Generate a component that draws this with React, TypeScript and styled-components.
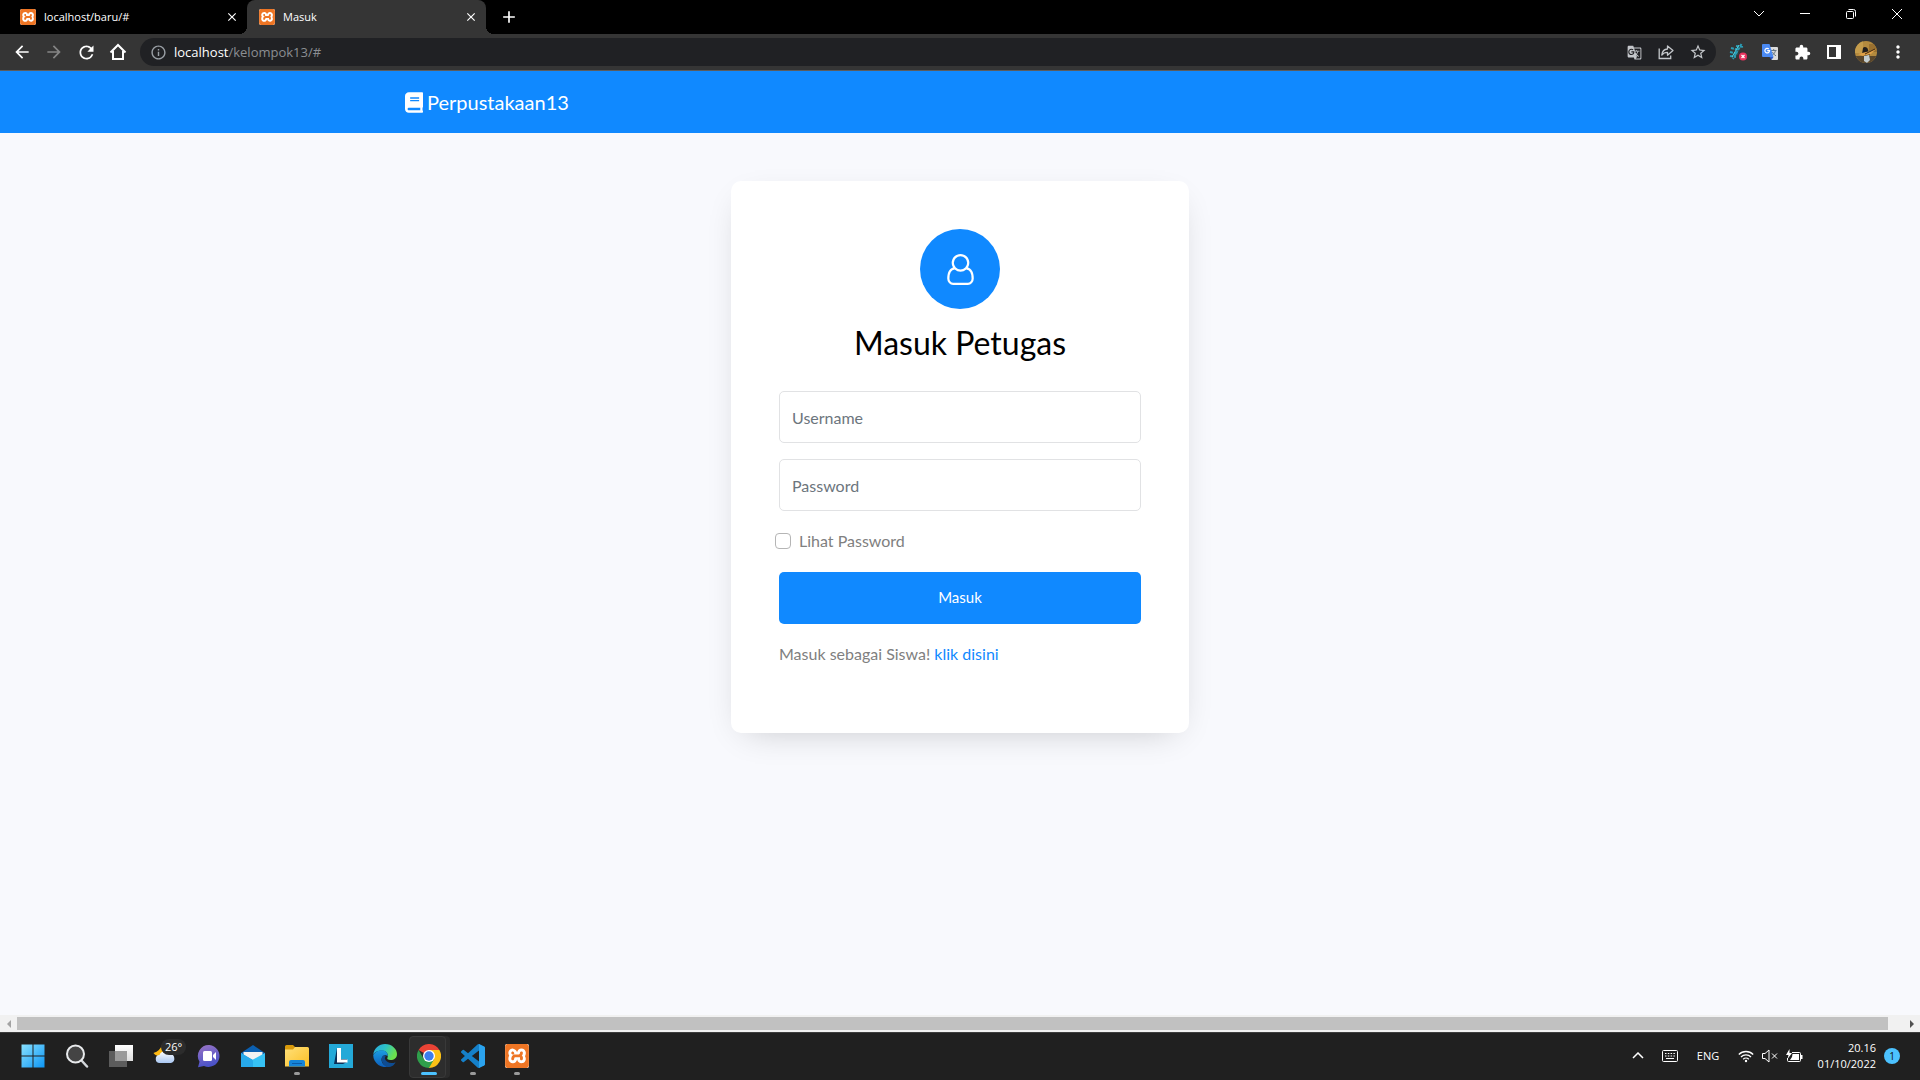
import React, { useState } from "react";
import styled, { createGlobalStyle } from "styled-components";
import {
  MdArrowBack,
  MdArrowForward,
  MdRefresh,
  MdOutlineInfo,
  MdGTranslate,
  MdStarBorder,
  MdExtension,
  MdMoreVert,
  MdClose,
  MdAdd,
} from "react-icons/md";
import { FaBook } from "react-icons/fa";
import { SiXampp } from "react-icons/si";

const BLUE = "#1089ff";

const GlobalStyle = createGlobalStyle`
  * { box-sizing: border-box; }
  body {
    margin: 0;
    font-family: Lato, sans-serif;
    font-size: 16px;
    line-height: 27px;
    color: gray;
    background: #f8f9fd;
  }
  button, input { font: inherit; }
`;

const systemFont = `"Open Sans", "Noto Sans", sans-serif`;

const Screen = styled.div`
  display: flex;
  flex-direction: column;
  min-height: 100vh;
`;

/* ---------- browser window ---------- */

const TitleBar = styled.header`
  display: flex;
  height: 34px;
  background: #000;
  font-family: ${systemFont};
`;

const TabList = styled.div`
  display: flex;
  padding: 0 8px;
`;

const Tab = styled.div<{ $active?: boolean }>`
  position: relative;
  display: flex;
  align-items: center;
  width: 239px;
  padding: 0 8px 0 12px;
  color: #fff;
  border-radius: 8px 8px 0 0;
  background: ${(p) => (p.$active ? "#353535" : "transparent")};

  ${(p) =>
    p.$active &&
    `
    &::before, &::after {
      content: "";
      position: absolute;
      bottom: 0;
      width: 8px;
      height: 8px;
    }
    &::before {
      right: 100%;
      background: radial-gradient(circle at 0 0, #000 8px, #353535 8px);
    }
    &::after {
      left: 100%;
      background: radial-gradient(circle at 100% 0, #000 8px, #353535 8px);
    }
  `}
`;

const TabLabel = styled.button`
  flex: 1;
  display: flex;
  align-items: center;
  gap: 8px;
  padding: 0;
  border: 0;
  background: none;
  color: inherit;
  font-size: 11px;
  line-height: 16px;
  text-align: left;
`;

const GlyphButton = styled.button<{ $w: number; $tone?: "dim" | "soft" }>`
  display: flex;
  align-items: center;
  justify-content: center;
  flex: none;
  width: ${(p) => p.$w}px;
  padding: 0;
  border: 0;
  background: none;
  color: ${(p) => (p.$tone === "dim" ? "#858585" : p.$tone === "soft" ? "#c4c7cb" : "#fff")};
`;

const WindowControls = styled.div`
  display: flex;
  height: 28px;
  margin-left: auto;
`;

const Toolbar = styled.div`
  display: flex;
  align-items: center;
  height: 37px;
  padding: 0 6px;
  background: #353535;
  border-bottom: 1px solid #5c5c5c;
  font-family: ${systemFont};
`;

const Omnibox = styled.div`
  flex: 1;
  display: flex;
  align-items: center;
  height: 28px;
  margin: 0 6px;
  padding: 0 2px 0 10px;
  border-radius: 14px;
  background: #202124;
  color: #9aa0a6;
`;

const Address = styled.a`
  flex: 1;
  padding-left: 7px;
  font-size: 13px;
  line-height: 18px;
  color: #8b8e92;
  text-decoration: none;

  b {
    font-weight: 400;
    color: #fff;
  }
`;

const LogoBox = styled.span<{ $size: number }>`
  display: flex;
  flex: none;
  width: ${(p) => p.$size}px;
  height: ${(p) => p.$size}px;
  border-radius: 2px;
  background: #fff;
  color: #ee7524;
  overflow: hidden;
`;

/* ---------- page ---------- */

const Navbar = styled.nav`
  background: ${BLUE};
`;

const Container = styled.div`
  display: flex;
  align-items: center;
  max-width: 1140px;
  height: 62px;
  margin: 0 auto;
  padding: 0 15px;
`;

const Brand = styled.a`
  display: flex;
  align-items: center;
  gap: 4px;
  color: #fff;
  font-size: 20px;
  line-height: 30px;
  text-decoration: none;
`;

const BookIcon = styled(FaBook)`
  width: 18px;
  height: 21px;
`;

const Main = styled.main`
  flex: 1;
  padding: 48px 16px;
`;

const Card = styled.form`
  max-width: 458px;
  margin: 0 auto;
  padding: 48px;
  border-radius: 10px;
  background: #fff;
  box-shadow: 0 10px 34px -15px rgba(0, 0, 0, 0.24);
`;

const Avatar = styled.div`
  display: flex;
  align-items: center;
  justify-content: center;
  width: 80px;
  height: 80px;
  margin: 0 auto 10px;
  border-radius: 50%;
  background: ${BLUE};
`;

const Title = styled.h1`
  margin: 0 0 24px;
  font-size: 32px;
  font-weight: 400;
  line-height: 48px;
  color: #000;
  text-align: center;
`;

const Field = styled.input`
  display: block;
  width: 100%;
  height: 52px;
  margin-bottom: 16px;
  padding: 0 12px;
  border: 1px solid #e1e2e4;
  border-radius: 5px;
  background: #fff;
  color: #495057;

  &::placeholder {
    color: #6c757d;
    opacity: 1;
  }
`;

const CheckRow = styled.label`
  display: flex;
  align-items: center;
  gap: 8px;
  margin: 0 -4px 18px;
`;

const Checkbox = styled.input`
  appearance: none;
  width: 16px;
  height: 16px;
  margin: 0;
  border: 1px solid #b5b5b5;
  border-radius: 4px;
  background: #fff;

  &:checked {
    background: ${BLUE};
    border-color: ${BLUE};
  }
`;

const Submit = styled.button`
  display: block;
  width: 100%;
  height: 52px;
  padding: 0 12px 2px;
  border: 0;
  border-radius: 5px;
  background: ${BLUE};
  color: #fff;
  font-size: 15px;
`;

const Note = styled.p`
  margin: 16px 0 18px;

  a {
    color: ${BLUE};
    text-decoration: none;
  }
`;

const ScrollTrack = styled.div`
  display: flex;
  align-items: center;
  height: 17px;
  background: #f1f1f1;
`;

const ScrollArrow = styled.button<{ $end?: boolean }>`
  display: flex;
  align-items: center;
  justify-content: center;
  flex: none;
  width: 17px;
  height: 17px;
  padding: 0;
  border: 0;
  background: none;
  color: ${(p) => (p.$end ? "#505050" : "#a3a3a3")};
`;

const ScrollThumb = styled.div`
  flex: 1;
  height: 13px;
  margin-right: 15px;
  background: #c1c1c1;
`;

/* ---------- taskbar ---------- */

const Taskbar = styled.footer`
  display: flex;
  align-items: center;
  height: 48px;
  padding: 0 20px 2px 11px;
  background: #202020;
  border-top: 1px solid #3d3d3d;
  color: #fff;
  font-family: ${systemFont};
  font-size: 11px;
  line-height: 16px;
`;

const AppButton = styled.button<{ $state?: "open" | "active" }>`
  position: relative;
  display: flex;
  align-items: center;
  justify-content: center;
  flex: none;
  width: 44px;
  height: 45px;
  padding: 0;
  border: 0;
  background: none;

  ${(p) =>
    p.$state &&
    `
    &::after {
      content: "";
      position: absolute;
      bottom: 3px;
      width: ${p.$state === "active" ? 16 : 6}px;
      height: 3px;
      border-radius: 2px;
      background: ${p.$state === "active" ? "#4cc2ff" : "#9a9a9a"};
    }
  `}
  ${(p) =>
    p.$state === "active" &&
    `
    &::before {
      content: "";
      position: absolute;
      left: 2px;
      top: 3px;
      width: 35px;
      height: 40px;
      border: 1px solid #393939;
      border-radius: 4px;
      background: #2d2d2d;
      box-shadow: 4px 0 0 #2b2b2b;
    }
    svg { position: relative; }
  `}
`;

const Temperature = styled.span`
  position: absolute;
  top: 6px;
  left: 18px;
  padding: 0 4px;
  border-radius: 8px;
  background: #2c2c2c;
  color: #fff;
`;

const Tray = styled.div`
  display: flex;
  align-items: center;
  margin-left: auto;
`;

const TrayButton = styled.button<{ $w: number }>`
  display: flex;
  align-items: center;
  justify-content: center;
  width: ${(p) => p.$w}px;
  height: 40px;
  padding: 0;
  border: 0;
  background: none;
  color: #fff;
`;

const Clock = styled.button`
  width: 74px;
  padding: 0 8px 0 0;
  border: 0;
  background: none;
  color: #fff;
  text-align: right;
`;

const Count = styled.span`
  width: 16px;
  height: 16px;
  border-radius: 50%;
  background: #4cc2ff;
  color: #111;
  font-size: 10px;
  text-align: center;
`;

/* ---------- drawings ---------- */

const XamppLogo = ({ size }: { size: number }) => (
  <LogoBox $size={size}>
    <SiXampp size={size} />
  </LogoBox>
);

const HomeIcon = () => (
  <svg width="18" height="18" viewBox="0 0 18 18" fill="none" stroke="currentColor" strokeWidth="2">
    <path d="M1.500 9.500 9 2l7.500 7.500M4 8v8h10V8" />
  </svg>
);

const ShareIcon = () => (
  <svg width="16" height="16" viewBox="0 0 16 16" fill="none" stroke="currentColor" strokeWidth="1.300">
    <path d="M1.200 4.500v10h11.500v-3" />
    <path d="M9.500 2v3C6 5.200 4.200 7.500 3.800 11c1.500-2 3.200-2.700 5.700-2.700v3L15 6.600z" strokeLinejoin="round" />
  </svg>
);

const BrushExtension = () => (
  <svg width="18" height="18" viewBox="0 0 18 18">
    <path d="M12.500 1 4 16M2 5l8 2M1 9l8 2M7 3l8 1M1 13l6 1" stroke="#2b9cb4" strokeWidth="2" fill="none" strokeDasharray="3 1" />
    <path d="M10 2 3 14" stroke="#4fd0e0" strokeWidth="1" />
    <circle cx="14" cy="13.500" r="4" fill="#e8335f" />
    <path d="m12.500 12 3 3m0-3-3 3" stroke="#fff" strokeWidth="1.200" />
  </svg>
);

const TranslateExtension = () => (
  <svg width="16" height="16" viewBox="0 0 16 16">
    <path d="M6 3h9a1 1 0 0 1 1 1v11a1 1 0 0 1-1 1H9.500z" fill="#dcdcdc" />
    <path d="M9 6.500h5.500M11.700 5v1.500M13.500 6.500c-.5 2.300-1.800 4-3.500 5M10.500 8c.5 1.500 2 3 3.500 3.800" stroke="#687783" fill="none" />
    <path d="M1 0h6.500l4 13H1a1 1 0 0 1-1-1V1a1 1 0 0 1 1-1z" fill="#4a8af4" />
    <path d="m7.500 13 2 3 2-3z" fill="#2a56c6" />
    <path d="M6.800 5A2.300 2.300 0 1 0 7.500 6.700H5.200" stroke="#fff" strokeWidth="1.200" fill="none" />
  </svg>
);

const SidePanelIcon = () => (
  <svg width="14" height="14" viewBox="0 0 14 14">
    <path d="M0 0h14v14H0zM2 2v10h7V2z" fill="currentColor" fillRule="evenodd" />
  </svg>
);

const ProfilePicture = () => (
  <svg width="22" height="22" viewBox="0 0 22 22">
    <clipPath id="profile"><circle cx="11" cy="11" r="11" /></clipPath>
    <g clipPath="url(#profile)">
      <path d="M0 0h22v22H0z" fill="#b48a3e" />
      <path d="M0 0h8v12H0z" fill="#c49c4c" />
      <path d="M14 3h8v8h-8z" fill="#9a7130" />
      <path d="M0 15h22v7H0z" fill="#59462c" />
      <path d="M8 7c1-2 5-1 5 2l2 5-5 2-3-3z" fill="#211d1b" />
      <path d="m9 15 5-1 1 5-3 3-3-2z" fill="#c3cdd0" />
      <path d="m3 13 12-3 6-2-5 5-8 2z" fill="#dfa047" />
      <path d="m10 13 10-5" stroke="#40270f" />
    </g>
  </svg>
);

const UserOutline = () => (
  <svg width="27" height="31" viewBox="128 0 1536 1792" fill="#fff">
    <path
      fillRule="evenodd"
      d="M1329 784q47 14 89.500 38t89 73 79.500 115.500 55 172 22 236.500q0 154-100 263.500t-241 109.500H469q-141 0-241-109.500T128 1419q0-131 22-236.500t55-172T284.500 895t89-73 89.500-38q-79-125-79-272 0-104 40.500-198.500T534 150 697.500 40.500 896 0t198.500 40.500T1258 150t109.500 163.500T1408 512q0 147-79 272zM896 128q-159 0-271.500 112.500T512 512t112.500 271.500T896 896t271.500-112.500T1280 512t-112.500-271.500T896 128zm427 1536q88 0 150.500-71.500T1536 1419q0-239-78.500-377T1232 897q-145 127-336 127T560 897q-147 7-225.500 145T256 1419q0 102 62.500 173.500T469 1664h854z"
    />
  </svg>
);

const StartLogo = () => (
  <svg width="24" height="24" viewBox="0 0 24 24">
    <linearGradient id="start" gradientUnits="userSpaceOnUse" x1="0" y1="0" x2="24" y2="24">
      <stop stopColor="#8be3ff" />
      <stop offset="1" stopColor="#0a94f5" />
    </linearGradient>
    <path d="M.5.5h11v11H.5zM12.500.5h11v11h-11zM.5 12.500h11v11H.5zM12.500 12.500h11v11h-11z" fill="url(#start)" />
  </svg>
);

const SearchLogo = () => (
  <svg width="24" height="24" viewBox="0 0 24 24">
    <path d="m17 17 5 5.500" stroke="#d4d8dc" strokeWidth="2.500" strokeLinecap="round" />
    <circle cx="10.500" cy="10" r="8.500" fill="#444" stroke="#e8eaec" strokeWidth="2" />
  </svg>
);

const TaskViewLogo = () => (
  <svg width="24" height="24" viewBox="0 0 24 24">
    <linearGradient id="tv" y2="1" x2="0"><stop stopColor="#fff" /><stop offset="1" stopColor="#ddd" /></linearGradient>
    <path d="M6 1h18v16H6z" fill="url(#tv)" />
    <path d="M0 7h18v16H0z" fill="#5c5c5c" />
    <path d="M6 7h12v10H6z" fill="#9a9a9a" />
  </svg>
);

const WeatherLogo = () => (
  <svg width="24" height="24" viewBox="0 0 24 24">
    <path d="M9 1c-1.500 4-4 6.500-8.500 8C3 13 9 13 12 9 10 7 9 4 9 1z" fill="#fdb913" />
    <linearGradient id="cloud" x2="0" y2="1"><stop stopColor="#fff" /><stop offset="1" stopColor="#a9c7f2" /></linearGradient>
    <path d="M6 19a4 4 0 0 1-.5-8 5.500 5.500 0 0 1 9.800-1 4.600 4.600 0 0 1 1.700 9z" transform="translate(1 0)" fill="url(#cloud)" />
  </svg>
);

const ChatLogo = () => (
  <svg width="24" height="24" viewBox="0 0 24 24">
    <linearGradient id="chat" x2="0.300" y2="1"><stop stopColor="#9a74c4" /><stop offset="1" stopColor="#4a52c8" /></linearGradient>
    <path d="M12.500 1A11 11 0 1 1 7 22l-6 1.200 1.500-5.500A11 11 0 0 1 12.500 1z" fill="url(#chat)" />
    <rect x="6" y="7" width="9" height="10" rx="1.500" fill="#fff" />
    <path d="m16 11 3-3v8l-3-3z" fill="#fff" />
  </svg>
);

const MailLogo = () => (
  <svg width="24" height="24" viewBox="0 0 24 24">
    <path d="M0 9 12 1l12 8v5H0z" fill="#0b5fb0" />
    <path d="M2.500 8h19v8h-19z" fill="#f2f2f2" />
    <path d="M0 9v14h24z" fill="#1c9ae0" />
    <path d="M24 9v14H0L12 15.500z" fill="#36c2f5" />
    <path d="m0 9 12 7.500V23H0z" fill="#27a9ea" />
  </svg>
);

const FolderLogo = () => (
  <svg width="24" height="24" viewBox="0 0 24 24">
    <linearGradient id="folder" x2="1" y2="1"><stop stopColor="#ffe07a" /><stop offset="1" stopColor="#fbbf24" /></linearGradient>
    <path d="M0 2.500A1.500 1.500 0 0 1 1.500 1H8l2 2v5H0z" fill="#d99a0b" />
    <path d="M0 5.500h8L10 3h12.500A1.500 1.500 0 0 1 24 4.500V22.500H0z" fill="url(#folder)" />
    <path d="M4 22.500V18a2 2 0 0 1 2-2h12a2 2 0 0 1 2 2v4.500z" fill="#1585d8" />
    <path d="M7 19.500h10" stroke="#0b5ca8" strokeWidth="1" />
  </svg>
);

const LetterLogo = () => (
  <svg width="24" height="24" viewBox="0 0 24 24">
    <path d="M0 0h24v24H0z" fill="#24a9d8" />
    <path d="M8 4 5 20h9l4-2V15h-6z" fill="#0c2f57" />
    <path d="M8 4h4v11.500h6.500V18.500H8z" fill="#fff" />
  </svg>
);

const EdgeLogo = () => (
  <svg width="24" height="24" viewBox="0 0 24 24">
    <linearGradient id="edgeTop" x2="1" y2="0.400"><stop stopColor="#2aa6e0" /><stop offset="0.500" stopColor="#2cc3c9" /><stop offset="1" stopColor="#6be04c" /></linearGradient>
    <linearGradient id="edgeLow" x2="0" y2="1"><stop stopColor="#1b9de2" /><stop offset="1" stopColor="#0d5ebb" /></linearGradient>
    <path d="M.3 10.500C1 4.500 6 0 12 0c7 0 12 5 12 10 0 4-3 6-6.500 6-2.500 0-4-1-3-2.500C16 10 13 6.500 9 6.500S2 8 .3 10.500z" fill="url(#edgeTop)" />
    <path d="M.2 11C2 7.500 6 6 9.500 6.300 13 6.500 15 9.500 14.800 12 12 10 8.500 12 8.500 15.500c0 4 3.500 7.500 8 6.700A12 12 0 0 1 .2 11z" fill="url(#edgeLow)" />
    <path d="M10 11.500c-2.500 3-1.500 9 4 11.500 4 .5 7.500-2 8.500-4.800-5 2.300-9.500-.2-10.500-3.200-.3-1.200.2-2 .8-2.600-.8-.9-1.800-1.200-2.800-.9z" fill="#0e4c92" />
  </svg>
);

const ChromeLogo = () => (
  <svg width="24" height="24" viewBox="0 0 24 24">
    <path d="M12 12 1.600 6A12 12 0 0 1 22.400 6z" fill="#ea4335" />
    <path d="M12 12V6h10.400A12 12 0 0 1 12 24z" fill="#fbc116" />
    <path d="M1.600 6 6.800 15 12 12l5.200 3L12 24A12 12 0 0 1 1.600 6z" fill="#2f9e4b" />
    <circle cx="12" cy="12" r="6" fill="#fff" />
    <circle cx="12" cy="12" r="4.700" fill="#3b7ded" />
  </svg>
);

const CodeLogo = () => (
  <svg width="24" height="24" viewBox="0 0 24 24">
    <path
      d="M23.150 2.587 18.210.21a1.494 1.494 0 0 0-1.705.29l-9.460 8.630-4.120-3.128a.999.999 0 0 0-1.276.057L.327 7.261A1 1 0 0 0 .326 8.740L3.899 12 .326 15.260a1 1 0 0 0 .001 1.479L1.650 17.940a.999.999 0 0 0 1.276.057l4.120-3.128 9.460 8.630a1.492 1.492 0 0 0 1.704.290l4.942-2.377A1.500 1.500 0 0 0 24 20.060V3.939a1.500 1.500 0 0 0-.850-1.352zm-5.146 14.861L10.826 12l7.178-5.448v10.896z"
      fill="#1580c9"
    />
    <path d="m18 0 5.300 2.700q.7.400.7 1.300v16q0 .9-.7 1.300L18 24z" fill="#2ba3ee" />
  </svg>
);

const KeyboardIcon = () => (
  <svg width="16" height="12" viewBox="0 0 16 12" fill="none" stroke="currentColor">
    <rect x="0.500" y="0.500" width="15" height="11" rx="1" />
    <path d="M3 3.500h10M3 6h10" strokeDasharray="1.500 1.300" />
    <path d="M4 8.500h8" />
  </svg>
);

const WifiIcon = () => (
  <svg width="16" height="14" viewBox="0 0 16 14" fill="none" stroke="currentColor" strokeWidth="1.300">
    <path d="M.8 5.500a10.200 10.200 0 0 1 14.400 0M3 8a7 7 0 0 1 10 0M5.200 10.300a4 4 0 0 1 5.600 0" />
    <circle cx="8" cy="12" r="1.200" fill="currentColor" stroke="none" />
  </svg>
);

const MutedIcon = () => (
  <svg width="16" height="14" viewBox="0 0 16 14" fill="none" stroke="currentColor">
    <path d="M.5 4.500H3L7 1v12L3 9.500H.5zM10 4.500l5 5m0-5-5 5" />
  </svg>
);

const BatteryIcon = () => (
  <svg width="17" height="14" viewBox="0 0 17 14">
    <path d="M6 3.500h7.500a1 1 0 0 1 1 1v7a1 1 0 0 1-1 1h-11a1 1 0 0 1-1-1V9" fill="none" stroke="currentColor" />
    <path d="M6.500 5H13v6H4l2-3zM15 6h1.500v4H15zM3.500 0 0 6h2.500l-1 4L6 4H3.500z" fill="currentColor" />
  </svg>
);

export default function App() {
  const [visible, setVisible] = useState(false);

  return (
    <Screen>
      <GlobalStyle />
      <TitleBar>
        <TabList>
          <Tab>
            <TabLabel>
              <XamppLogo size={16} />
              localhost/baru/#
            </TabLabel>
            <GlyphButton $w={14} aria-label="Close tab"><MdClose size={14} /></GlyphButton>
          </Tab>
          <Tab $active>
            <TabLabel>
              <XamppLogo size={16} />
              Masuk
            </TabLabel>
            <GlyphButton $w={14} aria-label="Close tab"><MdClose size={14} /></GlyphButton>
          </Tab>
        </TabList>
        <GlyphButton $w={30} aria-label="New tab"><MdAdd size={20} /></GlyphButton>
        <WindowControls>
          <GlyphButton $w={46} aria-label="Search tabs">
            <svg width="12" height="8" fill="none" stroke="currentColor"><path d="m1 1 5 5 5-5" /></svg>
          </GlyphButton>
          <GlyphButton $w={46} aria-label="Minimize">
            <svg width="10" height="2"><path d="M0 0h10v1H0z" fill="currentColor" /></svg>
          </GlyphButton>
          <GlyphButton $w={46} aria-label="Restore">
            <svg width="10" height="10" fill="none" stroke="currentColor">
              <rect x="0.500" y="2.500" width="7" height="7" rx="1" />
              <path d="M2.500.5h5a2 2 0 0 1 2 2v5" />
            </svg>
          </GlyphButton>
          <GlyphButton $w={46} aria-label="Close">
            <svg width="10" height="10" stroke="currentColor"><path d="m0 0 10 10m0-10L0 10" /></svg>
          </GlyphButton>
        </WindowControls>
      </TitleBar>

      <Toolbar>
        <GlyphButton $w={32} aria-label="Back"><MdArrowBack size={20} /></GlyphButton>
        <GlyphButton $w={32} $tone="dim" aria-label="Forward"><MdArrowForward size={20} /></GlyphButton>
        <GlyphButton $w={32} aria-label="Reload"><MdRefresh size={21} /></GlyphButton>
        <GlyphButton $w={32} aria-label="Home"><HomeIcon /></GlyphButton>
        <Omnibox>
          <MdOutlineInfo size={17} />
          <Address href="#"><b>localhost</b>/kelompok13/#</Address>
          <GlyphButton $w={32} $tone="soft" aria-label="Translate"><MdGTranslate size={15} /></GlyphButton>
          <GlyphButton $w={32} $tone="soft" aria-label="Share"><ShareIcon /></GlyphButton>
          <GlyphButton $w={32} $tone="soft" aria-label="Bookmark"><MdStarBorder size={18} /></GlyphButton>
        </Omnibox>
        <GlyphButton $w={32} aria-label="Brush extension"><BrushExtension /></GlyphButton>
        <GlyphButton $w={32} aria-label="Google Translate"><TranslateExtension /></GlyphButton>
        <GlyphButton $w={32} aria-label="Extensions"><MdExtension size={17} /></GlyphButton>
        <GlyphButton $w={32} aria-label="Side panel"><SidePanelIcon /></GlyphButton>
        <GlyphButton $w={32} aria-label="Profile"><ProfilePicture /></GlyphButton>
        <GlyphButton $w={32} aria-label="Menu"><MdMoreVert size={20} /></GlyphButton>
      </Toolbar>

      <Navbar>
        <Container>
          <Brand href="#"><BookIcon />Perpustakaan13</Brand>
        </Container>
      </Navbar>

      <Main>
        <Card onSubmit={(e) => e.preventDefault()}>
          <Avatar><UserOutline /></Avatar>
          <Title>Masuk Petugas</Title>
          <Field type="text" placeholder="Username" aria-label="Username" />
          <Field type={visible ? "text" : "password"} placeholder="Password" aria-label="Password" />
          <CheckRow>
            <Checkbox type="checkbox" checked={visible} onChange={(e) => setVisible(e.target.checked)} />
            Lihat Password
          </CheckRow>
          <Submit type="submit">Masuk</Submit>
          <Note>Masuk sebagai Siswa! <a href="#">klik disini</a></Note>
        </Card>
      </Main>

      <ScrollTrack>
        <ScrollArrow aria-label="Scroll left">
          <svg width="4" height="8"><path d="M4 0v8L0 4z" fill="currentColor" /></svg>
        </ScrollArrow>
        <ScrollThumb />
        <ScrollArrow $end aria-label="Scroll right">
          <svg width="4" height="8"><path d="M0 0v8l4-4z" fill="currentColor" /></svg>
        </ScrollArrow>
      </ScrollTrack>

      <Taskbar>
        <AppButton aria-label="Start"><StartLogo /></AppButton>
        <AppButton aria-label="Search"><SearchLogo /></AppButton>
        <AppButton aria-label="Task view"><TaskViewLogo /></AppButton>
        <AppButton aria-label="Weather"><WeatherLogo /><Temperature>26°</Temperature></AppButton>
        <AppButton aria-label="Chat"><ChatLogo /></AppButton>
        <AppButton aria-label="Mail"><MailLogo /></AppButton>
        <AppButton aria-label="File Explorer" $state="open"><FolderLogo /></AppButton>
        <AppButton aria-label="L"><LetterLogo /></AppButton>
        <AppButton aria-label="Edge"><EdgeLogo /></AppButton>
        <AppButton aria-label="Chrome" $state="active"><ChromeLogo /></AppButton>
        <AppButton aria-label="Code" $state="open"><CodeLogo /></AppButton>
        <AppButton aria-label="XAMPP" $state="open"><XamppLogo size={24} /></AppButton>
        <Tray>
          <TrayButton $w={32} aria-label="Hidden icons">
            <svg width="12" height="7" fill="none" stroke="currentColor" strokeWidth="1.500"><path d="m1 6 5-5 5 5" /></svg>
          </TrayButton>
          <TrayButton $w={32} aria-label="Touch keyboard"><KeyboardIcon /></TrayButton>
          <TrayButton $w={44}>ENG</TrayButton>
          <TrayButton $w={32} aria-label="Wi-Fi"><WifiIcon /></TrayButton>
          <TrayButton $w={16} aria-label="Volume"><MutedIcon /></TrayButton>
          <TrayButton $w={32} aria-label="Battery"><BatteryIcon /></TrayButton>
          <Clock>20.16<br />01/10/2022</Clock>
          <Count>1</Count>
        </Tray>
      </Taskbar>
    </Screen>
  );
}
